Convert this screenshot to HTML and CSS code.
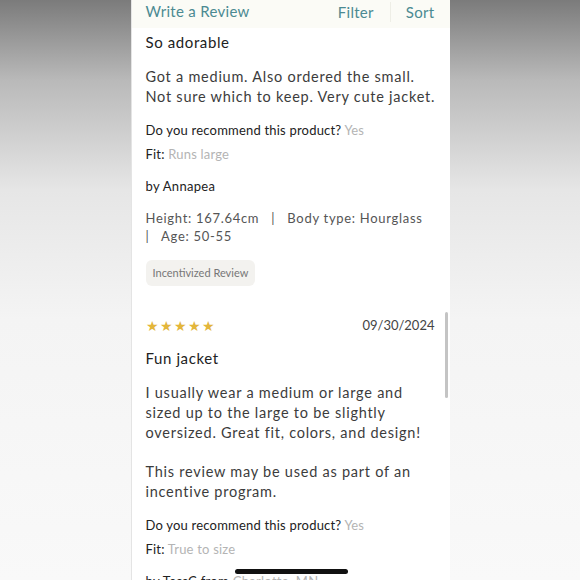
FILE: index.html
```html
<!DOCTYPE html>
<html lang="en">
<head>
    <meta charset="UTF-8">
    <meta name="viewport" content="width=device-width, initial-scale=1.0">
    <title>Reviews</title>
    <link rel="stylesheet" href="styles.css">
</head>
<body>
    <div class="phone">
        <div class="toolbar">
            <a href="#">Write a Review</a>
            <div class="toolbar-right">
                <a href="#">Filter</a>
                <span class="sep"></span>
                <a href="#">Sort</a>
            </div>
        </div>

        <div class="review">
            <h2 class="title">So adorable</h2>
            <p class="body">Got a medium. Also ordered the small. Not sure which to keep. Very cute jacket.</p>
            <p class="meta">Do you recommend this product? <span class="muted">Yes</span></p>
            <p class="meta">Fit: <span class="muted">Runs large</span></p>
            <p class="author">by Annapea</p>
            <p class="stats">Height: 167.64cm &nbsp;&nbsp;|&nbsp;&nbsp; Body type: Hourglass<br>|&nbsp;&nbsp; Age: 50-55</p>
            <span class="badge">Incentivized Review</span>
        </div>

        <div class="review">
            <div class="review-head">
                <span class="stars">&#9733;&#9733;&#9733;&#9733;&#9733;</span>
                <span class="date">09/30/2024</span>
            </div>
            <h2 class="title">Fun jacket</h2>
            <p class="body">I usually wear a medium or large and sized up to the large to be slightly oversized. Great fit, colors, and design!</p>
            <p class="body body-next">This review may be used as part of an incentive program.</p>
            <p class="meta">Do you recommend this product? <span class="muted">Yes</span></p>
            <p class="meta">Fit: <span class="muted">True to size</span></p>
            <p class="author">by TessC from <span class="muted">Charlotte, MN</span></p>
        </div>

        <div class="scrollbar"></div>
        <div class="home-bar"></div>
    </div>
</body>
</html>
```

FILE: styles.css
```css
body {
    margin: 0;
    padding: 0;
    height: 580px;
    overflow: hidden;
    font-family: Lato, "Open Sans", sans-serif;
    background: linear-gradient(to bottom, #7b7b7b 0px, #b9b9b9 80px, #e6e6e6 190px, #f4f4f4 320px, #f9f9f9 580px);
}

.phone {
    position: relative;
    width: 319px;
    height: 580px;
    margin: 0 auto;
    background-color: #fff;
    overflow: hidden;
    border-left: 1px solid #e4e4e4;
    box-sizing: border-box;
}

.toolbar {
    display: flex;
    justify-content: space-between;
    align-items: flex-start;
    height: 28px;
    padding: 2px 15px 0 14px;
    box-sizing: border-box;
    background-color: #fbfbf6;
    font-size: 15px;
    line-height: 18px;
    letter-spacing: 0.3px;
}

.toolbar a {
    color: #4b8a92;
    text-decoration: none;
}

.toolbar-right {
    display: flex;
    align-items: center;
}

.sep {
    width: 1px;
    height: 20px;
    margin: 0 15px 0 16px;
    background-color: #eeeee6;
}

.review {
    padding: 0 12px 0 14px;
}

.review-head {
    display: flex;
    justify-content: space-between;
    align-items: center;
    margin-top: 29px;
    margin-right: 3px;
    height: 20px;
}

.stars {
    color: #e3b63b;
    font-size: 14px;
    letter-spacing: 1px;
}

.date {
    color: #444;
    font-size: 13px;
}

.title {
    margin: 4px 0 0;
    font-size: 15px;
    font-weight: normal;
    color: #222;
    letter-spacing: 0.6px;
    line-height: 20px;
}

.review-head + .title {
    margin-top: 13px;
}

.body {
    margin: 15px 0 0;
    font-size: 14.5px;
    line-height: 20px;
    color: #3c3c3c;
    letter-spacing: 0.75px;
}

.body-next {
    margin-top: 19px;
}

.meta {
    margin: 15px 0 0;
    font-size: 13px;
    line-height: 16px;
    color: #222;
    letter-spacing: 0.2px;
}

.meta + .meta {
    margin-top: 8px;
}

.muted {
    color: #b4b4b4;
}

.author {
    margin: 16px 0 0;
    font-size: 13px;
    line-height: 16px;
    color: #222;
    letter-spacing: 0.3px;
}

.stats {
    margin: 15px 0 0;
    font-size: 13px;
    line-height: 18px;
    color: #555;
    letter-spacing: 0.7px;
}

.badge {
    display: inline-block;
    margin-top: 15px;
    padding: 5px 7px 6px;
    background-color: #f3f2ef;
    border-radius: 6px;
    font-size: 11px;
    line-height: 15px;
    color: #777;
}

.scrollbar {
    position: absolute;
    right: 2px;
    top: 312px;
    width: 3px;
    height: 86px;
    border-radius: 2px;
    background-color: #c4c4c4;
}

.home-bar {
    position: absolute;
    left: 103px;
    top: 569px;
    width: 113px;
    height: 5px;
    border-radius: 3px;
    background-color: #111;
}
```
